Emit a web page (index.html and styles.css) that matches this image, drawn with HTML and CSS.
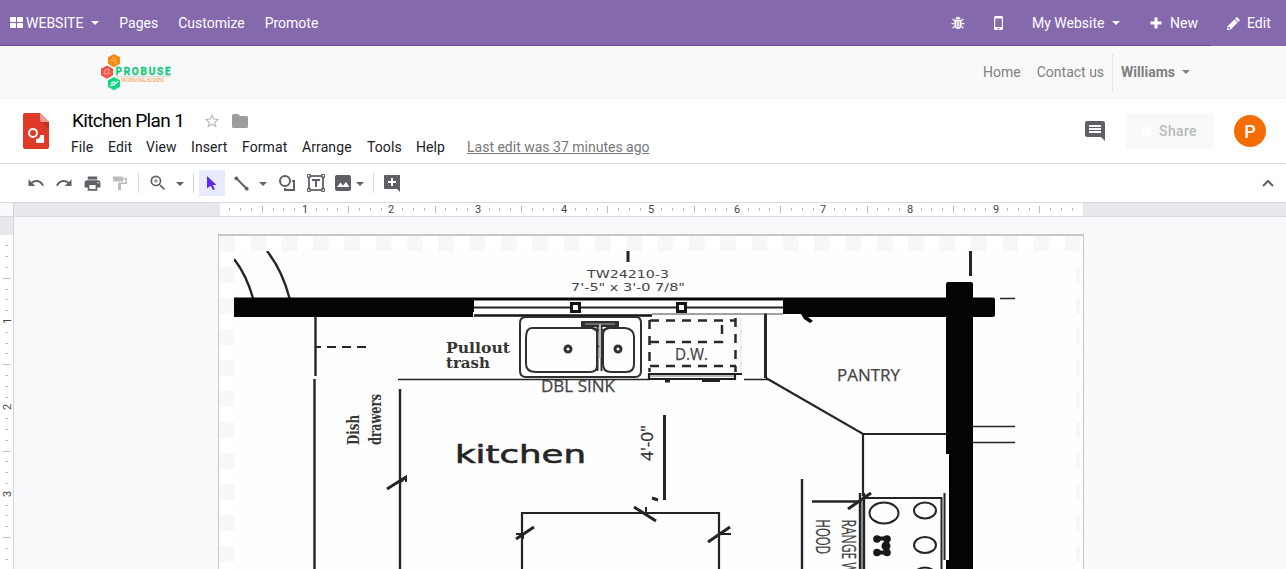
FILE: index.html
```html
<!DOCTYPE html>
<html lang="en">
<head>
<meta charset="utf-8">
<title>Kitchen Plan 1</title>
<link rel="stylesheet" href="styles.css">
</head>
<body>
<header class="topbar">
  <nav class="topbar-left">
    <a class="brand"><svg width="13" height="11" viewBox="0 0 13 11" fill="#fff"><rect width="6" height="5" rx=".8"/><rect x="7" width="6" height="5" rx=".8"/><rect y="6" width="6" height="5" rx=".8"/><rect x="7" y="6" width="6" height="5" rx=".8"/></svg>WEBSITE<i class="caret"></i></a>
    <a>Pages</a><a>Customize</a><a>Promote</a>
  </nav>
  <nav class="topbar-right">
    <a><svg width="14" height="14" viewBox="0 0 14 14"><path d="M4.400 3.400a2.600 2.600 0 0 1 5.200 0z" fill="#fff"/><path d="M3.500 4h7v5a3.500 4 0 0 1-7 0z" fill="#fff"/><path d="M3.800 5L1.600 2.800M10.200 5l2.200-2.200M3.500 7.700H.6M10.500 7.700h2.900M3.800 10l-2.200 2.400M10.200 10l2.200 2.400" stroke="#fff" stroke-width="1.200"/><path d="M5.800 5.400v6M8.200 5.400v6" stroke="#8569ad" stroke-width=".8"/></svg></a>
    <a><svg width="9" height="14" viewBox="0 0 9 14"><path fill="#fff" fill-rule="evenodd" d="M1.500 0h6A1.500 1.500 0 0 1 9 1.500v11A1.500 1.500 0 0 1 7.500 14h-6A1.500 1.500 0 0 1 0 12.500v-11A1.500 1.500 0 0 1 1.500 0zM1.200 2.400v8.600h6.600V2.400zM4.500 11.700a.8.800 0 1 0 .01 0z"/></svg></a>
    <a>My Website<i class="caret"></i></a>
    <a><svg width="12" height="12" viewBox="0 0 12 12"><path d="M6 .5v11M.5 6h11" stroke="#fff" stroke-width="3"/></svg><span class="new">New</span></a>
    <a class="edit"><svg width="13" height="13" viewBox="0 0 13 13" fill="#fff"><path d="M9.200.6q.6-.6 1.200 0l2 2q.6.6 0 1.200L11.200 5 8 1.800z"/><path fill-rule="evenodd" d="M7.400 2.400l3.200 3.200L3.800 12.400 0 13 .6 9.200zM1.500 9.800L1.200 11.100l.8.800 1.300-.3V10.600H2.400V9.700z"/></svg>Edit</a>
  </nav>
</header>

<div class="sitebar">
  <svg class="logo" width="76" height="38" viewBox="0 0 76 38">
    <path d="M14 0l6 3.200v6.600L14 13.200 8 9.800V3.200z" fill="#f68910"/>
    <path d="M7 11.500l6 3.200v6.600L7 24.700l-6-3.400v-6.600z" fill="#f1524f"/>
    <path d="M14 23l6 3.300v6.500L14 36.300l-6-3.500v-6.500z" fill="#0dd983"/>
    <path d="M12 4q4-1 3 2t2 4M11 6l3 1M4 20l1-4 4-1-1 5H4M9 19l2 1" fill="none" stroke="#fbc490" stroke-width=".8"/>
    <path d="M10 32l2-1 2 0 4-4M11 29l4-1" fill="none" stroke="#fff" stroke-width="1.300"/>
    <text x="15.500" y="21" class="logo-name" textLength="55">PROBUSE</text>
    <path d="M16 22.700h54" stroke="#d3d3d3"/>
    <text x="21" y="27.500" class="logo-tag" textLength="43" lengthAdjust="spacingAndGlyphs">PROFESSIONAL BUSINESS</text>
  </svg>
  <nav class="site-links"><a>Home</a><a>Contact us</a><a class="user">Williams<i class="caret"></i></a></nav>
</div>

<section class="dochead">
  <svg class="docicon" width="26" height="36" viewBox="0 0 26 36">
    <path d="M2 0h15l9 9v25a2 2 0 0 1-2 2H2a2 2 0 0 1-2-2V2a2 2 0 0 1 2-2z" fill="#df3a27"/>
    <path d="M17 0l9 9h-7a2 2 0 0 1-2-2z" fill="#f1998f"/><path d="M19 9h7v7z" fill="#b93327"/>
    <circle cx="10" cy="20" r="4" fill="none" stroke="#fff" stroke-width="2"/><path d="M21 22v8h-8v-4l3-.5 1.500-3.500z" fill="#fff"/>
  </svg>
  <div class="docinfo">
    <div class="titlerow"><h1>Kitchen Plan 1</h1>
      <svg class="star" width="18" height="18" viewBox="0 0 24 24"><path fill="#bcbcbf" d="M22 9.240l-7.190-.62L12 2 9.190 8.630 2 9.240l5.460 4.730L5.820 21 12 17.270 18.180 21l-1.630-7.030zM12 15.400l-3.760 2.270 1-4.280-3.320-2.880 4.380-.38L12 6.100l1.710 4.040 4.380.38-3.320 2.880 1 4.280z"/></svg>
      <svg width="16" height="14" viewBox="0 0 16 14"><path fill="#9c9ca0" d="M1.500 0H6l2 2h6.500A1.500 1.500 0 0 1 16 3.500v9a1.500 1.500 0 0 1-1.500 1.500h-13A1.500 1.500 0 0 1 0 12.500v-11A1.500 1.500 0 0 1 1.500 0z"/></svg>
    </div>
    <nav class="menus"><a>File</a><a>Edit</a><a>View</a><a>Insert</a><a>Format</a><a>Arrange</a><a>Tools</a><a>Help</a><a class="last">Last edit was 37 minutes ago</a></nav>
  </div>
  <div class="docactions">
    <svg width="20" height="20" viewBox="0 0 20 20"><path d="M2 0h16a2 2 0 0 1 2 2v18l-4-4H2a2 2 0 0 1-2-2V2a2 2 0 0 1 2-2z" fill="#5f6066"/><path d="M4 5h12M4 8h12M4 11h12" stroke="#fff" stroke-width="2"/></svg>
    <div class="share"><svg width="10" height="12" viewBox="0 0 10 12"><rect y="4" width="10" height="8" rx="1" fill="#fff"/><path d="M2.500 4V2.800a2.500 2.500 0 0 1 5 0V4" fill="none" stroke="#fff" stroke-width="1.200"/><circle cx="5" cy="8" r="1" fill="#f8f9f9"/></svg>Share</div>
    <div class="avatar">P</div>
  </div>
</section>

<section class="toolbar">
  <svg width="18" height="18" viewBox="0 0 24 24"><path d="M12.500 8c-2.650 0-5.050.99-6.900 2.600L2 7v9h9l-3.620-3.620c1.390-1.160 3.160-1.880 5.120-1.880 3.540 0 6.550 2.310 7.600 5.500l2.370-.78C21.080 11.030 17.150 8 12.500 8z"/></svg>
  <svg width="18" height="18" viewBox="0 0 24 24"><path d="M18.400 10.600C16.550 8.990 14.150 8 11.500 8c-4.650 0-8.580 3.030-9.960 7.220L3.900 16c1.050-3.190 4.050-5.500 7.600-5.500 1.950 0 3.730.72 5.120 1.880L13 16h9V7z"/></svg>
  <svg width="19" height="19" viewBox="0 0 24 24"><path d="M19 8H5c-1.660 0-3 1.340-3 3v6h4v4h12v-4h4v-6c0-1.660-1.340-3-3-3zm-3 11H8v-5h8zm3-7a1 1 0 1 1 0-2 1 1 0 0 1 0 2zM18 3H6v4h12z"/></svg>
  <svg class="dim" width="14" height="14" viewBox="0 0 14 14"><path d="M0 .5h10v5H0zM10 2h4v6H8v6H5V6.500h7.500v-3H10z"/></svg>
  <b class="sep"></b>
  <svg class="zoomer" width="20" height="20" viewBox="0 0 24 24"><path d="M15.500 14h-.79l-.28-.27A6.500 6.500 0 1 0 13.730 14.430l.27.28v.79l5 4.990L20.490 19zm-6 0a4.500 4.500 0 1 1 0-9 4.500 4.500 0 0 1 0 9zM10 7H9v2H7v1h2v2h1v-2h2V9h-2z"/></svg>
  <i class="tri"></i><b class="sep"></b>
  <span class="selected"><svg width="10" height="14" viewBox="0 0 10 14"><path d="M0 0l9.500 9H5.700l2.200 4.200-2 .9L3.700 9.800 0 12.500z" fill="#5b2cf0"/></svg></span>
  <svg width="15" height="15" viewBox="0 0 15 15"><path d="M2 2l11 11" stroke="#5f6066" stroke-width="2"/><circle cx="2.300" cy="2.300" r="1.900"/><circle cx="12.700" cy="12.700" r="1.900"/></svg>
  <i class="tri"></i>
  <svg width="16" height="16" viewBox="0 0 16 16"><circle cx="6" cy="6" r="5" fill="none" stroke="#5f6066" stroke-width="2"/><path d="M13 5h3v11H5v-3h2v1h7V7h-1z"/></svg>
  <svg width="18" height="18" viewBox="0 0 18 18"><path d="M2 2h14v14H2zM0.500 .5h3v3h-3zM14.500 .5h3v3h-3zM.5 14.500h3v3h-3zM14.500 14.500h3v3h-3z" fill="#fff" stroke="#5f6066"/><path d="M4 2h10M4 16h10M2 4v10M16 4v10" stroke="#5f6066" stroke-width="1.600"/><path d="M5 5h8v2H10v6H8V7H5z"/></svg>
  <svg class="pic" width="16" height="16" viewBox="0 0 16 16"><rect width="16" height="16" rx="2"/><path d="M2 12l3.500-4.500 2.500 3L11 7l3.500 5z" fill="#fff"/></svg>
  <i class="tri"></i><b class="sep"></b>
  <svg width="16" height="17" viewBox="0 0 16 17"><path d="M1 0h15v17l-3-3H1a1 1 0 0 1-1-1V1a1 1 0 0 1 1-1z"/><path d="M8 3v8M4 7h8" stroke="#fff" stroke-width="2"/></svg>
  <svg class="collapse" width="12" height="8" viewBox="0 0 12 8"><path d="M1 7l5-5 5 5" fill="none" stroke="#5f6066" stroke-width="2"/></svg>
</section>

<section class="hruler">
  <div class="corner"></div><div class="hpad"></div>
  <svg class="hscale" id="hscale" width="863" height="13" viewBox="220 203 863 13"></svg>
  <div class="hpad"></div>
</section>
<main class="workspace">
  <div class="vruler"><div class="vpad"></div><svg id="vscale" width="13" height="334" viewBox="0 235 13 334"></svg></div>
  <div class="stage">
    <div class="page">
      <svg class="plan" width="842" height="318" viewBox="234 251 842 318">
        <rect x="234" y="251" width="842" height="318" fill="#fefefe"/>
        <g fill="none" stroke="#252525" stroke-width="2">
          <path d="M234 259Q246 274 253 298M267 251Q282 270 289.500 298" stroke-width="2.400"/>
          <path d="M628 251v11M970.500 251v25" stroke-width="3"/>
          <path d="M1000 298.500h15M973 426.500h42M973 442.500h42" stroke-width="1.600"/>
          <path d="M315.500 316v60M314.500 379v190M400 389v180" stroke-width="2.400"/>
          <path d="M316 347h55" stroke-dasharray="9 6" stroke-dashoffset="4" stroke-width="2"/>
          <path d="M387 489l19-12" stroke-width="3"/><path d="M401 482l5-5v5"/>
          <path d="M398 379.500h252M744 379.500h24" stroke-width="1.600"/>
          <path d="M765.500 312v66" stroke-width="3"/>
          <path d="M766 378l97 56h83M863 434v62" stroke-width="2.200"/>
          <path d="M664.500 415v85" stroke-width="3"/><path d="M652 498l6 2" stroke-width="3"/>
          <path d="M522 569v-56h197v56" stroke-width="2.200"/>
          <path d="M634 507l22 14M516 539l18-12M708 542l22-15" stroke-width="3"/>
          <path d="M646 507v6M516 534h7v5M719 534h12"/>
          <path d="M802 479v90M812 501.500h48M860 493v76M864 493v76" stroke-width="2.400"/>
          <path d="M862 501v68" stroke="#888"/>
          <path d="M848 509l23-16" stroke-width="3"/><path d="M862 498h79.500v71M944.500 493v67"/>
          <ellipse cx="884" cy="513" rx="14.500" ry="10.500"/><ellipse cx="925" cy="510.500" rx="11" ry="8"/><ellipse cx="925" cy="545" rx="11" ry="8"/><ellipse cx="925" cy="575.500" rx="11" ry="8"/>
        </g>
        <path d="M878 538.500h9M878 552.500h9M887 539v14" stroke="#181818" stroke-width="4"/>
        <g fill="#181818"><circle cx="877" cy="539" r="3.800"/><circle cx="887" cy="539" r="3.800"/><circle cx="877" cy="552.500" r="3.800"/><circle cx="887" cy="552.500" r="3.800"/><circle cx="886" cy="546" r="4.500"/></g>
        <path d="M234 297.500h712v-13.500q0-2 2-2h23q2 0 2 2v13.500h20q2 0 2 2v15.500q0 2-2 2h-20v252h-27v-9h3v-106h-3v-137H808l5 4-3 2-6-4-3-5H783v-2H473v5H234z" fill="#040404"/>
        <path d="M474 300.500h309v13H474z" fill="#fff"/><path d="M474 307.500h309" stroke="#222" stroke-width="1.800"/>
        <path d="M474 315.500h178" stroke="#151515" stroke-width="2.500"/><path d="M652 314h131" stroke="#444"/>
        <g fill="#fff" stroke="#151515" stroke-width="3"><path d="M571.500 303.500h8v8h-8zM677.500 303.500h8v8h-8z"/></g>
        <g fill="none" stroke="#303030" stroke-width="2">
          <path d="M526 317h110q5 0 5 6v48q0 6-6 6H526q-6 0-6-6v-48q0-6 6-6z"/>
          <path d="M532 328h60q5 0 5 5v33q0 6-7 6h-54q-10 0-10-8v-26q0-10 6-10zM610 328h15q9 1 9 9v27q0 8-8 8h-15q-8 0-8-8v-29q0-7 7-7z"/>
          <path d="M597.500 323v48M601.500 323v48M596 346.500h6"/>
          <circle cx="568" cy="349" r="3" stroke-width="3"/><circle cx="618" cy="349" r="3" stroke-width="3"/>
          <path d="M581 324h38" stroke-width="6"/><path d="M585 324h30" stroke="#aaa" stroke-width="1"/><path d="M590 327q10 7 19 0"/>
        </g>
        <path d="M600 324v34" stroke="#bbb" stroke-width="2"/>
        <g fill="none" stroke="#292929" stroke-width="2.500" stroke-dasharray="9 7"><path d="M650 320.500h86M735.500 318v54M649.500 320v52M650 342h72v-22M650 366h86"/></g>
        <path d="M741 318v54" stroke="#ddd"/>
        <path d="M648 374h94M649 379h87M649 373v6M735 373v6" stroke="#202020" stroke-width="2.200"/>
        <path d="M650 376h84" stroke="#777"/><path d="M665 381h5M702 380.500h18" stroke="#222" stroke-width="3"/>
        <g class="plan-text">
          <text x="587" y="278" font-size="10" textLength="82" lengthAdjust="spacingAndGlyphs">TW24210-3</text>
          <text x="571" y="290.500" font-size="10.500" textLength="114" lengthAdjust="spacingAndGlyphs">7'-5" x 3'-0 7/8"</text>
          <text x="455" y="463" font-size="25.500" textLength="131" lengthAdjust="spacingAndGlyphs" class="ink word">kitchen</text>
        </g>
        <g class="plan-narrow">
          <text x="541" y="392" font-size="15.500" textLength="74" lengthAdjust="spacingAndGlyphs">DBL SINK</text>
          <text x="675" y="360" font-size="16.500" textLength="33" lengthAdjust="spacingAndGlyphs">D.W.</text>
          <text x="837" y="381" font-size="16.500" textLength="63" lengthAdjust="spacingAndGlyphs">PANTRY</text>
          <text transform="translate(653 461) rotate(-90)" font-size="16.500" textLength="36" lengthAdjust="spacingAndGlyphs" class="ink">4'-0"</text>
          <text transform="translate(815.500 519.500) rotate(90)" font-size="19.500" textLength="34.500" lengthAdjust="spacingAndGlyphs">HOOD</text>
          <text transform="translate(841.500 519.500) rotate(90)" font-size="19.500" textLength="54" lengthAdjust="spacingAndGlyphs">RANGE W</text>
        </g>
        <g class="plan-serif">
          <text x="446" y="352.500" font-size="14" textLength="64" lengthAdjust="spacingAndGlyphs">Pullout</text>
          <text x="446" y="368" font-size="14" textLength="44" lengthAdjust="spacingAndGlyphs">trash</text>
          <text transform="translate(359 445) rotate(-90)" font-size="17" textLength="30" lengthAdjust="spacingAndGlyphs">Dish</text>
          <text transform="translate(381 445) rotate(-90)" font-size="16" textLength="51" lengthAdjust="spacingAndGlyphs">drawers</text>
        </g>
      </svg>
    </div>
  </div>
</main>
<script src="rulers.js"></script>
</body>
</html>
```
FILE: styles.css
```css
* { box-sizing: border-box; }
body { margin: 0; height: 569px; overflow: hidden; display: flex; flex-direction: column; font: 14px Roboto, sans-serif; background: #fff; }
svg { display: block; flex: none; }
.caret { display: inline-block; border: 4px solid transparent; border-top-color: currentColor; border-bottom: 0; margin-left: 8px; vertical-align: 3px; }

.topbar { height: 46px; flex: none; display: flex; justify-content: space-between; background: #8569ad; color: #fff; }
.topbar a { display: flex; align-items: center; }
.topbar-left { flex: 1; display: flex; padding-left: 10px; gap: 20px; border-bottom: 1px solid #6b489d; }
.brand svg { margin-right: 3px; }
.topbar-right { display: grid; grid-template-columns: 43px 38px 118px 61px 75px; }
.topbar-right a { border-bottom: 1px solid #6b489d; }
.topbar-right .edit { border-bottom: 0; padding-left: 16px; gap: 7px; }
.new { margin-left: 8px; }

.sitebar { height: 53px; flex: none; display: flex; justify-content: space-between; background: #f9f9f9; border-bottom: 1px solid #f5f6f7; padding: 8px 96px 0 100px; }
.logo { overflow: visible; }
.logo-name { font: bold 10px Roboto, sans-serif; fill: #0dc97c; stroke: #0dc97c; stroke-width: .3px; }
.logo-tag { font: 4.500px "Open Sans", sans-serif; fill: #f58a20; }
.site-links { height: 37px; line-height: 36px; display: flex; color: #808080; }
.site-links a { margin-right: 16px; }
.site-links a:nth-child(2) { margin-right: 8px; }
.site-links .user { height: 37px; margin: 0; padding-left: 8px; border-left: 1px solid #e6e6e6; font-weight: bold; }
.site-links .caret { margin-left: 7px; }

.dochead { height: 65px; flex: none; display: flex; border-bottom: 1px solid #dadce0; padding-left: 23px; }
.docicon { margin-top: 14px; }
.docinfo { padding-left: 23px; }
.titlerow { height: 36px; padding-top: 7px; display: flex; align-items: center; }
.titlerow h1 { font: 19px/28px Roboto, sans-serif; width: 131px; margin: 0; color: #000; letter-spacing: -.65px; }
.star { margin-right: 11px; }
.menus { display: grid; grid-template-columns: 37px 38px 45px 51px 60px 65px 49px 51px auto; line-height: 24px; color: #202124; white-space: nowrap; letter-spacing: .1px; }
.menus a { margin-left: -1px; }
.menus .last { color: #777; text-decoration: underline; letter-spacing: 0; }
.docactions { margin-left: auto; display: flex; align-items: center; padding-right: 20px; }
.share { width: 88px; height: 36px; margin: 0 20px 0 21px; padding-right: 2px; display: flex; align-items: center; justify-content: center; gap: 8px; border-radius: 4px; background: #f8f9f9; color: #b9bbbd; font: 500 14px Roboto, sans-serif; letter-spacing: .35px; }
.avatar { width: 32px; height: 32px; border-radius: 50%; background: #f56c00; color: #fff; font: 500 18px/34px Roboto, sans-serif; text-align: center; }

.toolbar { height: 38px; flex: none; padding: 0 12px 0 22px; display: grid; grid-template-columns: 28px 28px 28px 28px 9px 30px 14px 12px 26px 32px 12px 36px 22px 24px 18px 9px 28px 1fr; align-items: center; justify-items: center; fill: #5f6066; }
.toolbar .dim { fill: #bcbcbe; }
.sep { width: 1px; height: 20px; background: #dadce0; }
.tri { border: 4px solid transparent; border-top-color: #5f6066; border-bottom: 0; margin-top: 2px; }
.selected { width: 26px; height: 26px; background: #e8eafd; display: grid; place-items: center; }
.pic { justify-self: end; }
.collapse { justify-self: end; }

.hruler { height: 15px; flex: none; display: grid; grid-template-columns: 14px 206px 863px 1fr; border-top: 1px solid #d9dbe0; border-bottom: 1px solid #d9dbe0; background: #fff; }
.corner { border-right: 1px solid #d3d5d9; background: #f8f9fa; }
.hpad { background: #e7e8ec; }
.ruler-num { font: 11px Roboto, sans-serif; fill: #444; text-anchor: middle; }
.workspace { flex: 1; min-height: 0; display: flex; }
.vruler { width: 14px; border-right: 1px solid #d3d5d9; background: #fff; }
.vpad { height: 18px; background: #e7e8ec; }
.stage { flex: 1; background: #f8f9fb; padding: 17px 202px 0 204px; }
.page { height: 340px; padding: 15px 0 0 15px; border: 1px solid #c6c7c9; border-top-width: 2px; background: #fff repeating-conic-gradient(#fff 0 25%, #fff 0 50%, #fff 0 75%, #f7f7f7 0 100%) 0 0 / 31.33px 31px; }
.plan-text { font-family: "DejaVu Sans", sans-serif; fill: #444; }
.plan-narrow { font-family: "Open Sans", sans-serif; fill: #444; stroke: #444; stroke-width: .25px; }
.plan-serif { font-family: "DejaVu Serif", serif; font-weight: bold; fill: #353535; }
.ink { fill: #252525; }
.word { stroke: #252525; stroke-width: .6px; }
```
FILE: rulers.js
```js
// Rulers use eight divisions per inch at 86.4 pixels per inch.
const PPI = 86.4;

function drawRuler(svg, origin, count, vertical) {
  let marks = "";
  for (let i = 1; i < count; i++) {
    const p = Math.round(origin + i * PPI / 8);
    if (i % 8 === 0) {
      const n = i / 8;
      marks += vertical
        ? `<text class="ruler-num" transform="translate(11 ${p}) rotate(-90)">${n}</text>`
        : `<text class="ruler-num" x="${p}" y="213">${n}</text>`;
    } else {
      const half = i % 4 === 0;
      marks += vertical
        ? `<rect x="${half ? 3 : 5}" y="${p}" width="${half ? 7 : 3}" height="1" fill="#b8bbc1"/>`
        : `<rect x="${p}" y="${half ? 206 : 208}" width="1" height="${half ? 7 : 3}" fill="#b8bbc1"/>`;
    }
  }
  svg.innerHTML = marks;
}

drawRuler(document.getElementById("hscale"), 218.6, 80, false);
drawRuler(document.getElementById("vscale"), 234.6, 31, true);
```
